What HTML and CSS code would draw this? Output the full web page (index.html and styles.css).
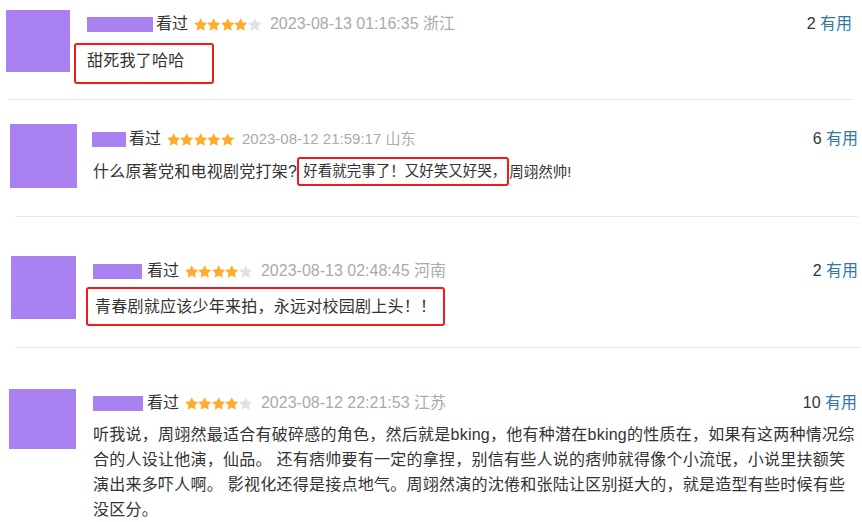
FILE: index.html
```html
<!DOCTYPE html>
<html lang="zh-CN">
<head>
<meta charset="utf-8">
<title>短评</title>
<link rel="stylesheet" href="styles.css">
</head>
<body>
<svg class="sprite" width="0" height="0" aria-hidden="true">
  <symbol id="star" viewBox="1.3 1 21.4 20.6">
    <path d="M12 1.2l3.2 6.7 7.3 1-5.3 5.1 1.3 7.3L12 17.8l-6.5 3.5 1.3-7.3L1.5 8.9l7.3-1z"/>
  </symbol>
</svg>

<div class="list">
  <div class="comment c1">
    <div class="avatar"></div>
    <div class="body">
      <div class="head">
        <span class="name"></span>
        <span class="seen">看过</span>
        <span class="stars">
          <svg class="st on"><use href="#star"/></svg><svg class="st on"><use href="#star"/></svg><svg class="st on"><use href="#star"/></svg><svg class="st on"><use href="#star"/></svg><svg class="st off"><use href="#star"/></svg>
        </span>
        <span class="time">2023-08-13 01:16:35 浙江</span>
        <span class="votes"><span class="num">2</span> <span class="useful">有用</span></span>
      </div>
      <div class="text"><div class="mark mark-block">甜死我了哈哈</div></div>
    </div>
  </div>
  <div class="sep sep1"></div>

  <div class="comment c2">
    <div class="avatar"></div>
    <div class="body">
      <div class="head">
        <span class="name"></span>
        <span class="seen">看过</span>
        <span class="stars">
          <svg class="st on"><use href="#star"/></svg><svg class="st on"><use href="#star"/></svg><svg class="st on"><use href="#star"/></svg><svg class="st on"><use href="#star"/></svg><svg class="st on"><use href="#star"/></svg>
        </span>
        <span class="time">2023-08-12 21:59:17 山东</span>
        <span class="votes"><span class="num">6</span> <span class="useful">有用</span></span>
      </div>
      <div class="text">什么原著党和电视剧党打架?<span class="small"><span class="mark mark-inline">好看就完事了！又好笑又好哭，</span>周翊然帅!</span></div>
    </div>
  </div>
  <div class="sep sep2"></div>

  <div class="comment c3">
    <div class="avatar"></div>
    <div class="body">
      <div class="head">
        <span class="name"></span>
        <span class="seen">看过</span>
        <span class="stars">
          <svg class="st on"><use href="#star"/></svg><svg class="st on"><use href="#star"/></svg><svg class="st on"><use href="#star"/></svg><svg class="st on"><use href="#star"/></svg><svg class="st off"><use href="#star"/></svg>
        </span>
        <span class="time">2023-08-13 02:48:45 河南</span>
        <span class="votes"><span class="num">2</span> <span class="useful">有用</span></span>
      </div>
      <div class="text"><div class="mark mark-wide">青春剧就应该少年来拍，永远对校园剧上头！！</div></div>
    </div>
  </div>
  <div class="sep sep3"></div>

  <div class="comment c4">
    <div class="avatar"></div>
    <div class="body">
      <div class="head">
        <span class="name"></span>
        <span class="seen">看过</span>
        <span class="stars">
          <svg class="st on"><use href="#star"/></svg><svg class="st on"><use href="#star"/></svg><svg class="st on"><use href="#star"/></svg><svg class="st on"><use href="#star"/></svg><svg class="st off"><use href="#star"/></svg>
        </span>
        <span class="time">2023-08-12 22:21:53 江苏</span>
        <span class="votes"><span class="num">10</span> <span class="useful">有用</span></span>
      </div>
      <div class="text long">听我说，周翊然最适合有破碎感的角色，然后就是bking，他有种潜在bking的性质在，如果有这两种情况综合的人设让他演，仙品。 还有痞帅要有一定的拿捏，别信有些人说的痞帅就得像个小流氓，小说里扶额笑演出来多吓人啊。 影视化还得是接点地气。周翊然演的沈倦和张陆让区别挺大的，就是造型有些时候有些没区分。</div>
    </div>
  </div>
  <div class="sep sep4"></div>
</div>
</body>
</html>
```

FILE: styles.css
```css
html, body {
  margin: 0;
  padding: 0;
  background: #fff;
}
body {
  font-family: "Liberation Sans", "Noto Sans CJK SC", sans-serif;
  color: #333;
  font-size: 16px;
  overflow: hidden;
}
.sprite {
  position: absolute;
  width: 0;
  height: 0;
}
.list {
  width: 862px;
}
.comment {
  display: flex;
  align-items: flex-start;
}
.avatar {
  flex: none;
  background: #a981f1;
}
.body {
  flex: 1;
  min-width: 0;
}
.head {
  display: flex;
  align-items: center;
  height: 20px;
  line-height: 20px;
  white-space: nowrap;
}
.name {
  display: inline-block;
  height: 15px;
  background: #a981f1;
}
.seen {
  margin-left: 3px;
  color: #333;
}
.stars {
  display: inline-flex;
  margin-left: 6px;
}
.st {
  width: 13.4px;
  height: 13px;
}
.st.on { fill: #ffac2d; }
.st.off { fill: #e1e1e1; }
.time {
  margin-left: 9px;
  color: #aaa;
}
.votes {
  margin-left: auto;
}
.num { color: #333; }
.useful { color: #3377aa; }
.text {
  letter-spacing: 0.25px;
  line-height: 21px;
}
.mark {
  border: 2px solid #f21b1b;
  border-radius: 3px;
}
.mark-block {
  width: fit-content;
  margin-left: -13px;
  padding: 5px 27px 11px 11px;
  line-height: 21px;
}
.small {
  font-size: 14.5px;
  letter-spacing: 0;
}
.mark-inline {
  display: inline-block;
  vertical-align: top;
  padding: 2px 1px 2px 4px;
  line-height: 21px;
}
.mark-wide {
  width: fit-content;
  margin-left: -9px;
  padding: 7px;
  line-height: 21px;
}
.sep {
  height: 1px;
  background: #e8e8e8;
}

/* block 1 */
.c1 { padding: 10px 10px 15px 6px; }
.c1 .avatar { width: 64px; height: 62px; }
.c1 .body { margin-left: 17px; padding-top: 4px; }
.c1 .name { width: 66px; }
.c1 .text { margin-top: 9px; }
.sep1 { margin: 0 10px 0 9px; }

/* block 2 */
.c2 { padding: 24px 4px 28px 10px; }
.c2 .avatar { width: 67px; height: 64px; }
.c2 .body { margin-left: 15px; padding-top: 5px; }
.c2 .name { width: 34px; }
.c2 .time { font-size: 15px; margin-left: 8px; }
.c2 .text { margin-top: 8px; padding-left: 1px; height: 29px; line-height: 29px; overflow: hidden; }
.sep2 { margin: 0 4px 0 15px; }

/* block 3 */
.c3 { padding: 39px 4px 21px 11px; }
.c3 .avatar { width: 65px; height: 63px; }
.c3 .body { margin-left: 17px; padding-top: 5px; }
.c3 .name { width: 49px; }
.c3 .seen { margin-left: 5px; }
.c3 .text { margin-top: 6px; padding-left: 2px; }
.sep3 { margin: 0 2px 0 15px; }

/* block 4 */
.c4 { padding: 41px 5px 0 9px; }
.c4 .avatar { width: 67px; height: 60px; }
.c4 .body { margin-left: 17px; padding-top: 4px; }
.c4 .name { width: 50px; }
.c4 .seen { margin-left: 4px; }
.c4 .text.long { margin-top: 9px; line-height: 25px; }
.sep4 { height: 2px; background: #e2e2e2; margin: 0; }
```
